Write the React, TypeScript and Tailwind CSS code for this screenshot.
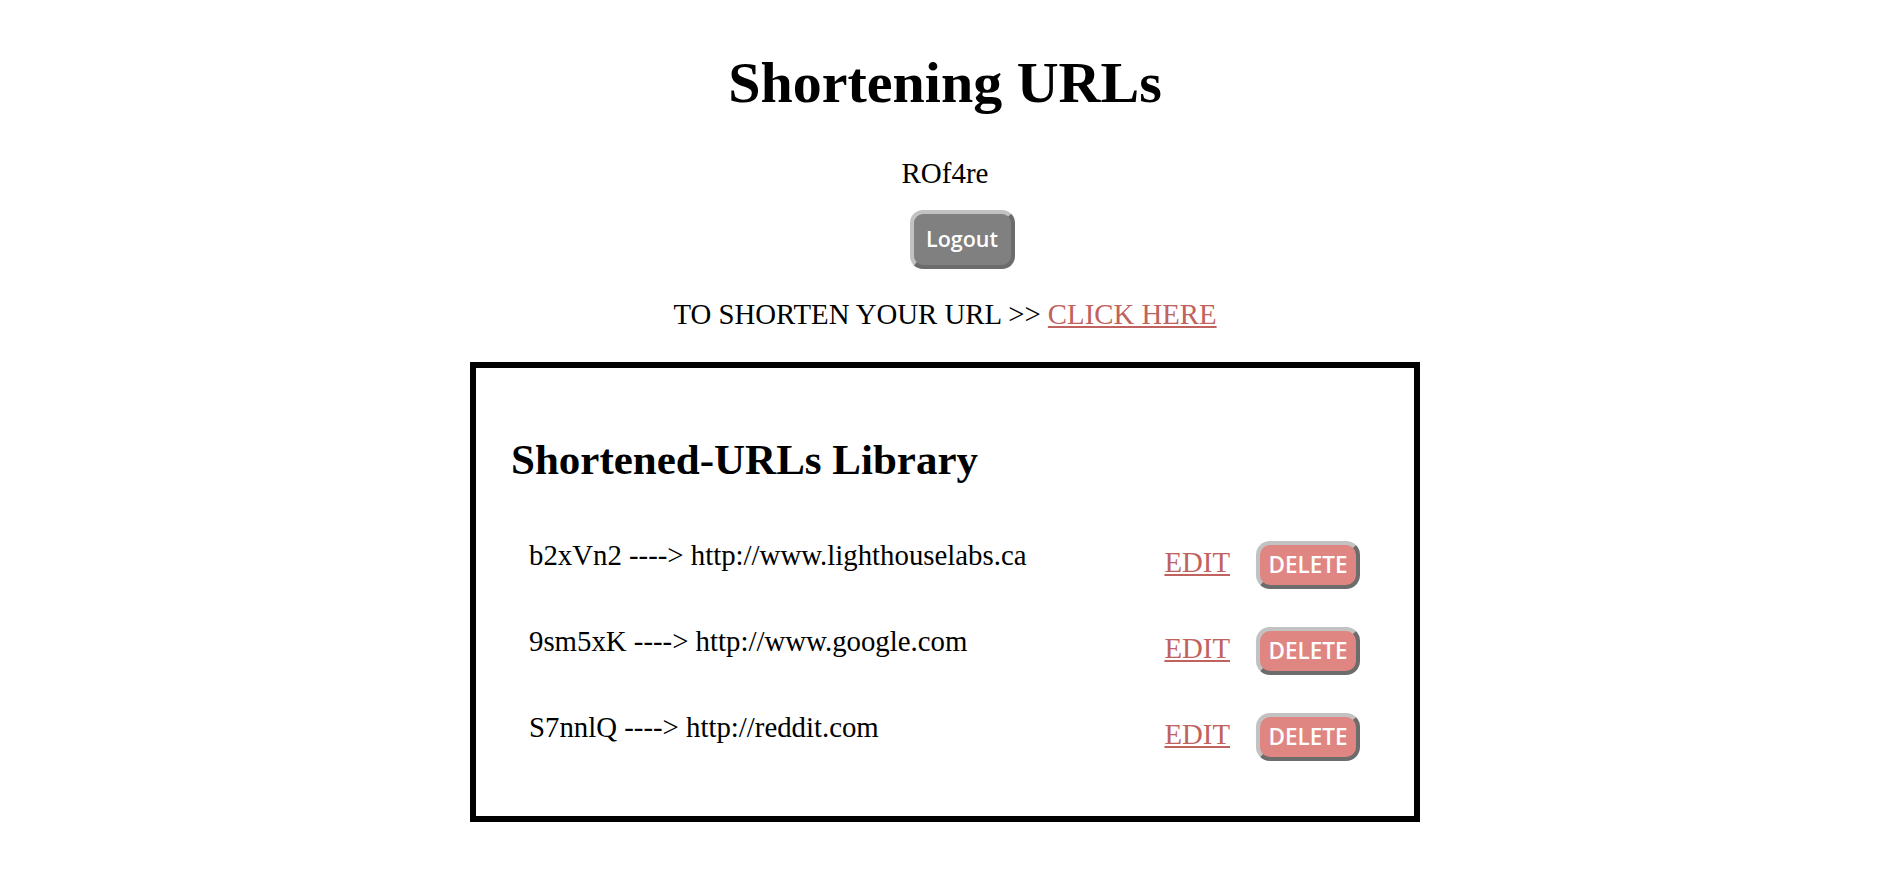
import React from 'react';

const links = [
  { id: 'b2xVn2', url: 'http://www.lighthouselabs.ca' },
  { id: '9sm5xK', url: 'http://www.google.com' },
  { id: 'S7nnlQ', url: 'http://reddit.com' },
];

const serif = { fontFamily: '"Liberation Serif", "Times New Roman", serif' };
const sans = { fontFamily: '"Open Sans", "Liberation Sans", Arial, sans-serif' };

const App: React.FC = () => {
  return (
    <div className="bg-white min-h-screen pr-[10px] text-black" style={serif}>
      <div className="flex flex-col items-center pt-[50px] pb-10">
        <h1 className="text-[58px] leading-[66px] font-bold">Shortening URLs</h1>

        <p className="mt-[41px] text-[29px] leading-[33px]">ROf4re</p>

        <button
          className="mt-[20px] ml-[34px] w-[105px] h-[59px] flex items-center justify-center rounded-[13px] border-4 border-t-[#c2c2c2] border-l-[#c2c2c2] border-r-[#6c6c6c] border-b-[#6c6c6c] bg-[#808080] text-white text-[21.5px] font-semibold"
          style={sans}
        >
          Logout
        </button>

        <p className="mt-[28px] text-[28.8px] leading-[34px]">
          TO SHORTEN YOUR URL &gt;&gt;{' '}
          <a href="#" className="text-[#c0625e] underline">
            CLICK HERE
          </a>
        </p>

        <section className="mt-[31px] w-[950px] border-[6px] border-black pt-[67px] pb-[55px] pl-[35px] pr-[35px]">
          <h2 className="text-[43px] leading-[50px] font-bold">Shortened-URLs Library</h2>

          <div className="mt-[56px] pl-[18px] pr-[19px] flex flex-col gap-[38px]">
            {links.map((link) => (
              <div key={link.id} className="flex items-start h-[48px]">
                <span className="-mt-[2px] text-[28.8px] leading-[33px] flex-1">
                  {link.id} ----&gt; {link.url}
                </span>
                <a href="#" className="mt-[5px] text-[28.8px] leading-[33px] text-[#c0625e] underline">
                  EDIT
                </a>
                <button
                  className="ml-[26px] w-[104px] h-[48px] flex items-center justify-center rounded-[14px] border-4 border-t-[#c2c2c2] border-l-[#c2c2c2] border-r-[#6c6c6c] border-b-[#6c6c6c] bg-[#e08682] text-white text-[22.5px] font-semibold"
                  style={sans}
                >
                  DELETE
                </button>
              </div>
            ))}
          </div>
        </section>
      </div>
    </div>
  );
};

export default App;
